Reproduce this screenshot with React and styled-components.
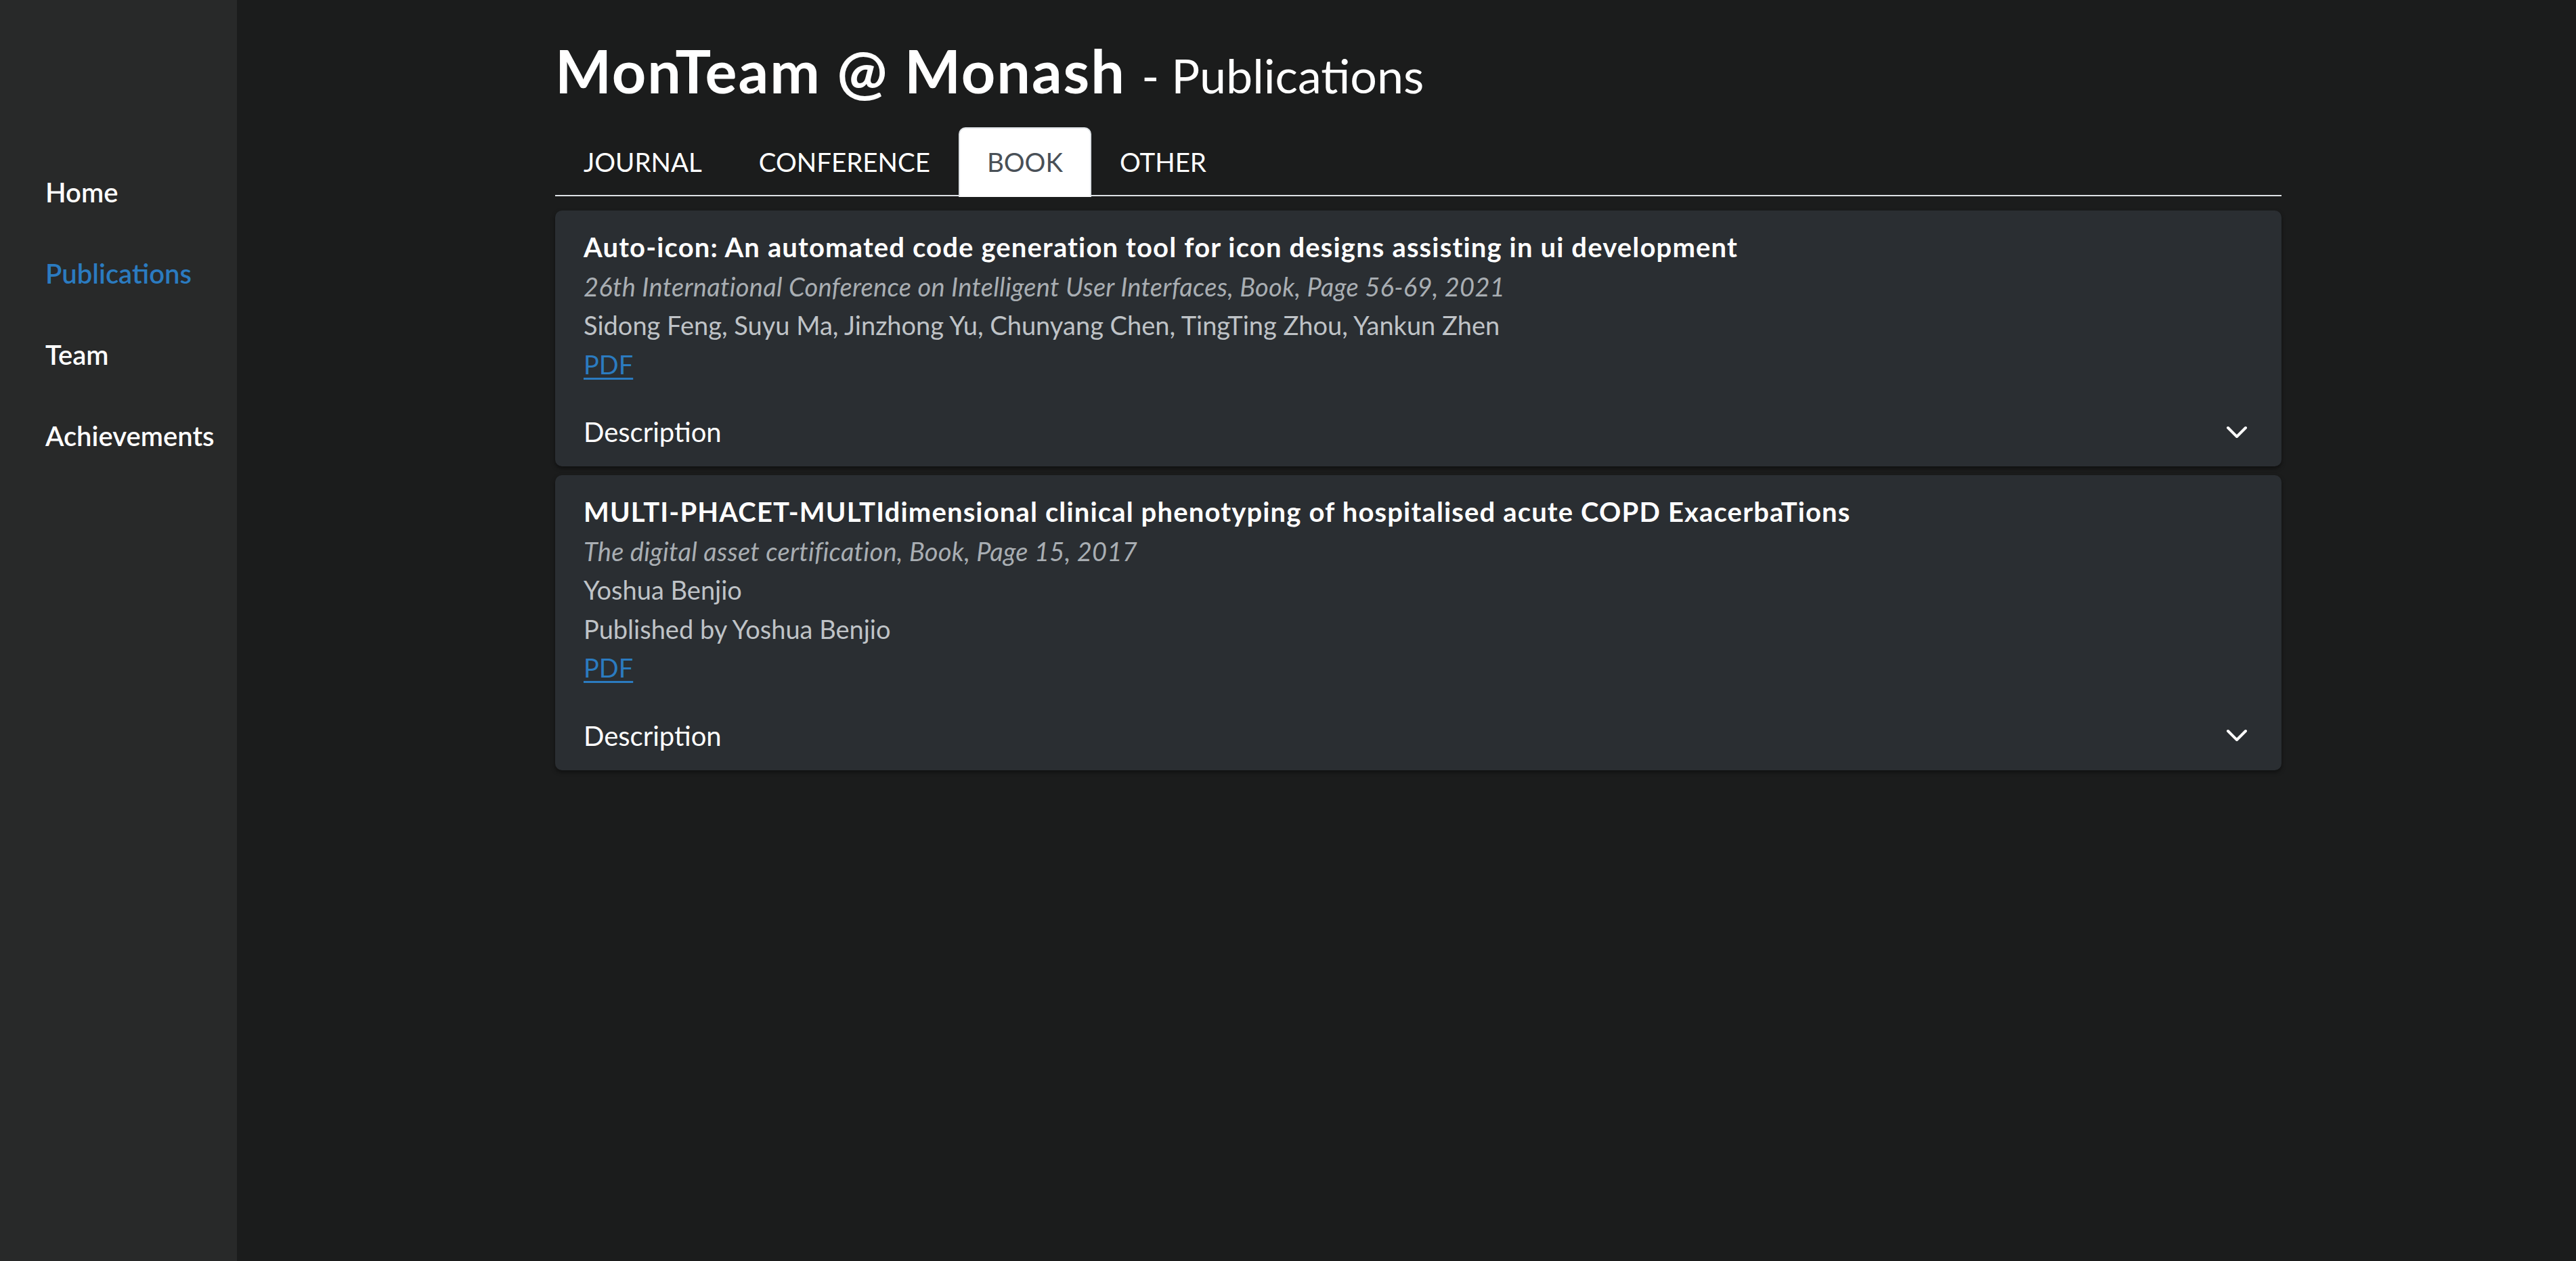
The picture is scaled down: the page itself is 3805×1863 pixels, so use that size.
import React from "react";
import styled, { createGlobalStyle } from "styled-components";

const GlobalStyle = createGlobalStyle`
  html, body {
    margin: 0;
    padding: 0;
    background: #1b1c1c;
    font-family: Lato, "Open Sans", "Noto Sans", sans-serif;
    color: #ffffff;
  }
  * { box-sizing: border-box; }
`;

const Page = styled.div`
  display: flex;
  min-height: 100vh;
`;

const Sidebar = styled.nav`
  width: 350px;
  flex: 0 0 350px;
  background: #282929;
  padding: 256px 0 0 67px;
  display: flex;
  flex-direction: column;
  gap: 63px;
`;

const NavItem = styled.a`
  font-size: 40px;
  line-height: 57px;
  font-weight: 600;
  color: ${(p) => (p.$active ? "#2b7bc0" : "#ffffff")};
  text-decoration: none;
`;

const Main = styled.main`
  flex: 1;
  padding: 52px 0 0 470px;
`;

const Content = styled.div`
  width: 2550px;
`;

const Heading = styled.h1`
  margin: 0 0 30px;
  font-size: 88px;
  line-height: 1.2;
  font-weight: 700;
  letter-spacing: 2px;
  color: #ffffff;
`;

const HeadingSub = styled.span`
  font-size: 70px;
  font-weight: 400;
  letter-spacing: 0;
`;

const Tabs = styled.div`
  display: flex;
  border-bottom: 2.5px solid #dee2e6;
`;

const Tab = styled.button`
  font-family: inherit;
  font-size: 38.5px;
  line-height: 57px;
  font-weight: 400;
  text-transform: uppercase;
  padding: 21px 40px;
  margin-bottom: -2.5px;
  border: 2.5px solid ${(p) => (p.$active ? "#dee2e6" : "transparent")};
  border-bottom-color: ${(p) => (p.$active ? "#ffffff" : "transparent")};
  border-radius: 10px 10px 0 0;
  background: ${(p) => (p.$active ? "#ffffff" : "transparent")};
  color: ${(p) => (p.$active ? "#495057" : "#ffffff")};
  cursor: pointer;
`;

const CardList = styled.div`
  margin-top: 21px;
  display: flex;
  flex-direction: column;
  gap: 13px;
`;

const Card = styled.article`
  background: #2a2e32;
  border-radius: 10px;
  box-shadow: 0 3px 6px rgba(0, 0, 0, 0.45);
  padding: 26px 42px 22px;
`;

const Line = styled.div`
  font-size: 38px;
  line-height: 57.5px;
`;

const PubTitle = styled(Line)`
  font-size: 40px;
  font-weight: 700;
  letter-spacing: 1.15px;
  color: #ffffff;
`;

const Venue = styled(Line)`
  font-style: italic;
  letter-spacing: 0.3px;
  color: #a9aeb3;
`;

const Meta = styled(Line)`
  color: #bfc3c7;
`;

const PdfLink = styled.a`
  font-size: 38px;
  line-height: 57.5px;
  color: #2b7bc0;
  text-decoration: underline;
  text-underline-offset: 5px;
  text-decoration-thickness: 3px;
  display: inline-block;
`;

const DescRow = styled.div`
  margin-top: 43px;
  display: flex;
  align-items: center;
  justify-content: space-between;
  padding-right: 8px;
  font-size: 40px;
  line-height: 57px;
  color: #ffffff;
`;

const Chevron = () => (
  <svg width="32" height="20" viewBox="0 0 32 20" aria-hidden="true">
    <polyline
      points="3,3 16,16 29,3"
      fill="none"
      stroke="#ffffff"
      strokeWidth="4"
      strokeLinecap="round"
      strokeLinejoin="round"
    />
  </svg>
);

const navItems = ["Home", "Publications", "Team", "Achievements"];
const tabs = ["Journal", "Conference", "Book", "Other"];

const pubs = [
  {
    title:
      "Auto-icon: An automated code generation tool for icon designs assisting in ui development",
    venue:
      "26th International Conference on Intelligent User Interfaces, Book, Page 56-69, 2021",
    lines: [
      "Sidong Feng, Suyu Ma, Jinzhong Yu, Chunyang Chen, TingTing Zhou, Yankun Zhen",
    ],
  },
  {
    title:
      "MULTI-PHACET-MULTIdimensional clinical phenotyping of hospitalised acute COPD ExacerbaTions",
    venue: "The digital asset certification, Book, Page 15, 2017",
    lines: ["Yoshua Benjio", "Published by Yoshua Benjio"],
  },
];

export default function App() {
  return (
    <>
      <GlobalStyle />
      <Page>
        <Sidebar>
          {navItems.map((n) => (
            <NavItem key={n} href="#" $active={n === "Publications"}>
              {n}
            </NavItem>
          ))}
        </Sidebar>
        <Main>
          <Content>
            <Heading>
              MonTeam @ Monash <HeadingSub>- Publications</HeadingSub>
            </Heading>
            <Tabs>
              {tabs.map((t) => (
                <Tab key={t} $active={t === "Book"}>
                  {t}
                </Tab>
              ))}
            </Tabs>
            <CardList>
              {pubs.map((p) => (
                <Card key={p.title}>
                  <PubTitle>{p.title}</PubTitle>
                  <Venue>{p.venue}</Venue>
                  {p.lines.map((l) => (
                    <Meta key={l}>{l}</Meta>
                  ))}
                  <div>
                    <PdfLink href="#">PDF</PdfLink>
                  </div>
                  <DescRow>
                    <span>Description</span>
                    <Chevron />
                  </DescRow>
                </Card>
              ))}
            </CardList>
          </Content>
        </Main>
      </Page>
    </>
  );
}
